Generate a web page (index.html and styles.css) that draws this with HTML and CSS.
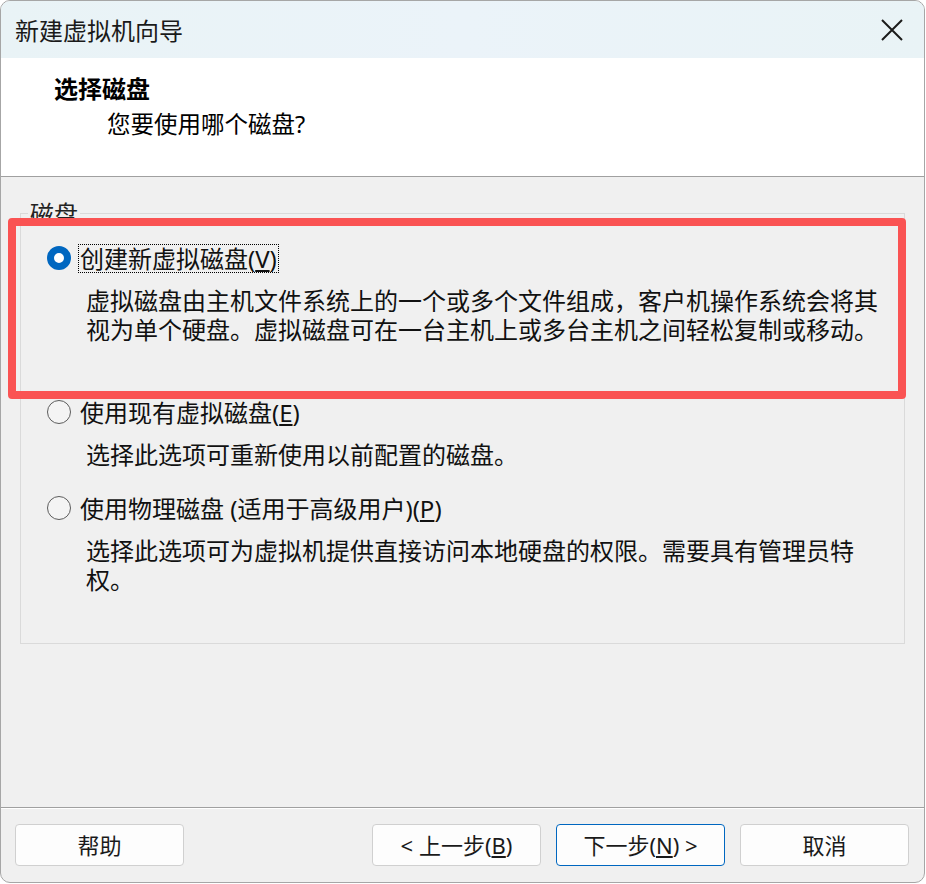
FILE: index.html
```html
<!DOCTYPE html>
<html lang="zh-CN">
<head>
<meta charset="utf-8">
<title>新建虚拟机向导</title>
<link rel="stylesheet" href="styles.css">
</head>
<body>
<div class="window">
  <div class="titlebar">
    <span class="title">新建虚拟机向导</span>
    <span class="close" aria-label="关闭">
      <svg width="22" height="22" viewBox="0 0 22 22"><path d="M1 1 L21 21 M21 1 L1 21" stroke="#1b1b1b" stroke-width="2" fill="none"/></svg>
    </span>
  </div>
  <div class="header">
    <div class="heading">选择磁盘</div>
    <div class="subtitle">您要使用哪个磁盘?</div>
  </div>
  <div class="content">
    <fieldset class="group">
      <legend class="legend">磁盘</legend>
      <div class="option">
        <div class="opt-head">
          <span class="radio checked"></span>
          <span class="label focused">创建新虚拟磁盘(<u>V</u>)</span>
        </div>
        <div class="desc desc-tall">虚拟磁盘由主机文件系统上的一个或多个文件组成，客户机操作系统会将其视为单个硬盘。虚拟磁盘可在一台主机上或多台主机之间轻松复制或移动。</div>
      </div>
      <div class="option">
        <div class="opt-head">
          <span class="radio"></span>
          <span class="label">使用现有虚拟磁盘(<u>E</u>)</span>
        </div>
        <div class="desc">选择此选项可重新使用以前配置的磁盘。</div>
      </div>
      <div class="option">
        <div class="opt-head">
          <span class="radio"></span>
          <span class="label">使用物理磁盘 (适用于高级用户)(<u>P</u>)</span>
        </div>
        <div class="desc">选择此选项可为虚拟机提供直接访问本地硬盘的权限。需要具有管理员特权。</div>
      </div>
    </fieldset>
  </div>
  <div class="footer">
    <button class="btn">帮助</button>
    <div class="btn-group">
      <button class="btn">&lt; 上一步(<u>B</u>)</button>
      <button class="btn btn-default">下一步(<u>N</u>) &gt;</button>
      <button class="btn">取消</button>
    </div>
  </div>
  <div class="highlight"></div>
</div>
</body>
</html>
```

FILE: styles.css
```css
* { box-sizing: border-box; }

html, body {
  margin: 0;
  padding: 0;
  background: #ffffff;
}

body {
  font-family: "Noto Sans", "Noto Sans CJK SC", sans-serif;
  color: #111;
  width: 926px;
  height: 884px;
  overflow: hidden;
}

.window {
  position: relative;
  width: 925px;
  height: 883px;
  border: 1px solid #a6a6a6;
  border-radius: 10px;
  overflow: hidden;
  display: flex;
  flex-direction: column;
  background: #f0f0f0;
}

.titlebar {
  height: 57px;
  flex: none;
  background: linear-gradient(90deg, #e9f3f6 0%, #ebf3f9 50%, #e9f3f6 100%);
  display: flex;
  align-items: center;
  justify-content: space-between;
  padding-left: 14px;
  padding-right: 21px;
}

.title {
  font-family: "Noto Sans CJK SC", sans-serif;
  font-size: 24px;
  line-height: 30px;
  color: #1a1a1a;
}

.close {
  display: flex;
  width: 22px;
  height: 22px;
}

.header {
  flex: none;
  height: 119px;
  background: #ffffff;
  border-bottom: 1px solid #a0a0a0;
  padding: 15px 0 0 53px;
}

.heading {
  font-family: "Noto Sans CJK SC", sans-serif;
  font-weight: 700;
  font-size: 24px;
  line-height: 30px;
  color: #000;
}

.subtitle {
  font-family: "Noto Sans", "Noto Sans CJK SC", sans-serif;
  font-size: 23.5px;
  line-height: 30px;
  margin-top: 6px;
  padding-left: 53px;
  color: #000;
}

.content {
  flex: 1;
  padding: 22px 19px 0 19px;
}

.group {
  margin: 0;
  border: 1px solid #dadada;
  padding: 16px 0 49px 0;
  min-width: 0;
}

.legend {
  font-family: "Noto Sans CJK SC", sans-serif;
  font-size: 24px;
  line-height: 28px;
  padding: 0 2px;
  margin-left: 7px;
  color: #222;
}

.option {
  padding-left: 25px;
}

.option + .option {
  margin-top: 24px;
}

.opt-head {
  display: flex;
  align-items: center;
  height: 30px;
}

.radio {
  width: 24px;
  height: 24px;
  border-radius: 50%;
  border: 1.5px solid #5c5c5c;
  background: #f4f4f4;
  flex: none;
  margin-left: 1px;
  margin-right: 7px;
}

.radio.checked {
  border: 7px solid #0067c0;
  background: #ffffff;
}

.label {
  font-size: 24px;
  line-height: 27px;
  color: #111;
  border: 1px dotted transparent;
  padding: 0 1px;
  white-space: nowrap;
}

.label.focused {
  border-color: #000;
}

.desc {
  margin-top: 13px;
  margin-left: 40px;
  width: 800px;
  font-size: 24px;
  line-height: 29px;
  color: #111;
}

.desc-tall {
  min-height: 87px;
}

.footer {
  flex: none;
  height: 75px;
  border-top: 1px solid #a0a0a0;
  box-shadow: inset 0 1px 0 #ffffff;
  display: flex;
  justify-content: space-between;
  align-items: flex-start;
  padding: 16px 15px 0 14px;
}

.btn-group {
  display: flex;
  gap: 15px;
}

.btn {
  width: 169px;
  height: 42px;
  border: 1px solid #d0d0d0;
  border-radius: 4px;
  background: #fdfdfd;
  font-family: "Noto Sans", "Noto Sans CJK SC", sans-serif;
  font-size: 22px;
  line-height: 28px;
  color: #1a1a1a;
  padding: 0;
}

.btn-default {
  border-color: #0067c0;
}

.highlight {
  position: absolute;
  left: 7px;
  top: 217px;
  width: 898px;
  height: 181px;
  border: 8px solid #fa5353;
  border-radius: 4px;
  pointer-events: none;
}
```
